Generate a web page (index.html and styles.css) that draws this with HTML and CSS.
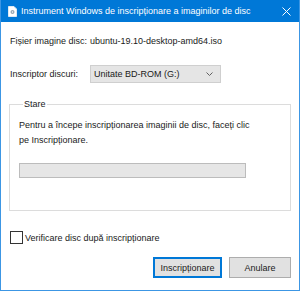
FILE: index.html
```html
<!DOCTYPE html>
<html lang="ro">
<head>
    <meta charset="UTF-8">
    <title>Instrument Windows de inscripționare a imaginilor de disc</title>
    <link rel="stylesheet" href="styles.css">
</head>
<body>
    <div class="window">
        <div class="titlebar">
            <svg class="appicon" width="9" height="11" viewBox="0 0 9 11">
                <path d="M0.5 0.5 H6 L8.5 3 V10.5 H0.5 Z" fill="#fff" stroke="#dfe9f3"/>
                <circle cx="4.5" cy="6" r="2" fill="#9aa7b4"/>
                <circle cx="4.5" cy="6" r="0.7" fill="#fff"/>
            </svg>
            <span class="title">Instrument Windows de inscripționare a imaginilor de disc</span>
            <svg class="close" width="9" height="9" viewBox="0 0 9 9">
                <path d="M0.5 0.5 L8.5 8.5 M8.5 0.5 L0.5 8.5" stroke="#fff" stroke-width="1"/>
            </svg>
        </div>

        <div class="content">
            <div class="row file">
                <span class="label">Fișier imagine disc:</span>
                <span>ubuntu-19.10-desktop-amd64.iso</span>
            </div>

            <div class="row burner">
                <span class="label">Inscriptor discuri:</span>
                <div class="select">
                    <span>Unitate BD-ROM (G:)</span>
                    <svg width="7" height="4" viewBox="0 0 7 4">
                        <path d="M0.5 0.5 L3.5 3.5 L6.5 0.5" fill="none" stroke="#606060"/>
                    </svg>
                </div>
            </div>

            <fieldset class="status">
                <legend>Stare</legend>
                <p>Pentru a începe inscripționarea imaginii de disc, faceți clic pe Inscripționare.</p>
                <div class="progressbar"></div>
            </fieldset>

            <label class="check">
                <span class="box"></span>
                Verificare disc după inscripționare
            </label>

            <div class="buttons">
                <button class="default">Inscripționare</button>
                <button>Anulare</button>
            </div>
        </div>
    </div>
</body>
</html>
```

FILE: styles.css
```css
* {
    margin: 0;
    padding: 0;
    box-sizing: border-box;
}
body {
    background-color: white;
    font-family: "Liberation Sans", Arial, sans-serif;
    font-size: 9px;
    color: #1a1a1a;
}
.window {
    width: 300px;
    height: 291px;
    border: 1px solid #3c96e4;
    border-top: none;
    display: flex;
    flex-direction: column;
    overflow: hidden;
}
.titlebar {
    height: 22px;
    margin: 0 -1px;
    background-color: #0078d7;
    color: white;
    display: flex;
    align-items: center;
    padding-left: 8px;
}
.appicon {
    margin-right: 4px;
    flex-shrink: 0;
}
.title {
    font-size: 9px;
    flex: 1;
    white-space: nowrap;
}
.close {
    margin-right: 9px;
    flex-shrink: 0;
}
.content {
    padding: 0 8px;
    display: flex;
    flex-direction: column;
}
.row {
    display: flex;
    align-items: center;
}
.row .label {
    width: 81px;
    padding-left: 1px;
}
.file {
    margin-top: 12px;
    height: 14px;
}
.burner {
    margin-top: 17px;
}
.select {
    width: 131px;
    height: 18px;
    background-color: #e5e5e5;
    border: 1px solid #cfcfcf;
    display: flex;
    align-items: center;
    justify-content: space-between;
    padding: 0 7px 0 3px;
}
.status {
    margin-top: 16px;
    height: 112px;
    border: 1px solid #dcdcdc;
    padding: 0 9px;
}
.status legend {
    margin-left: 4px;
    padding: 0 1px;
}
.status p {
    margin-top: 9px;
    width: 236px;
    line-height: 15px;
}
.progressbar {
    margin-top: 15px;
    width: 227px;
    height: 15px;
    background-color: #e6e6e6;
    border: 1px solid #bcbcbc;
}
.check {
    margin-top: 20px;
    display: flex;
    align-items: center;
    gap: 2px;
    padding-left: 1px;
}
.box {
    width: 13px;
    height: 13px;
    border: 1px solid #333;
    background-color: white;
}
.buttons {
    margin-top: 13px;
    display: flex;
    justify-content: flex-end;
    gap: 7px;
}
button {
    font-family: inherit;
    font-size: 9px;
    color: #1a1a1a;
    height: 21px;
    background-color: #e1e1e1;
    border: 1px solid #adadad;
    width: 62px;
}
button.default {
    width: 69px;
    border: 2px solid #0078d7;
}
```
